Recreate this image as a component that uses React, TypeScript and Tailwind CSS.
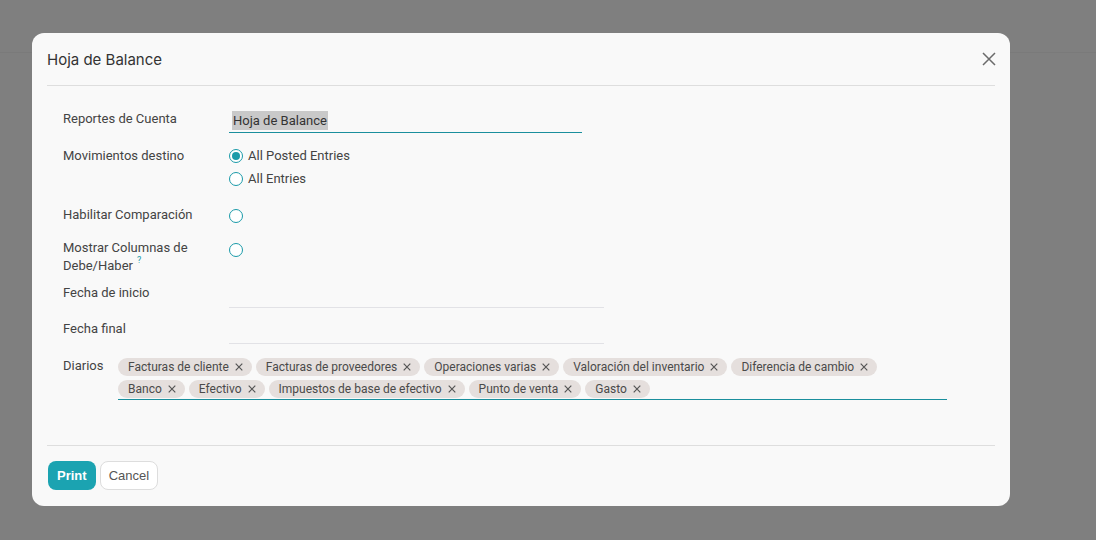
import React from "react";

const tagsRow1 = ["Facturas de cliente", "Facturas de proveedores", "Operaciones varias", "Valoración del inventario", "Diferencia de cambio"];
const tagsRow2 = ["Banco", "Efectivo", "Impuestos de base de efectivo", "Punto de venta", "Gasto"];

function Tag({ label }: { label: string }) {
  return (
    <span className="inline-flex items-center h-[18px] rounded-full bg-[#e5dfdd] pl-[10px] pr-[9px] text-[12px] leading-[18px] text-[#4a4a4a]">
      {label}
      <svg className="ml-[6px]" width="8" height="8" viewBox="0 0 8 8">
        <path d="M0.7 0.7 L7.3 7.3 M7.3 0.7 L0.7 7.3" stroke="#555" strokeWidth="1.2" />
      </svg>
    </span>
  );
}

function Radio({ checked }: { checked?: boolean }) {
  return (
    <span className="flex items-center justify-center w-[14px] h-[14px] rounded-full border border-[#1a9aa9] bg-white">
      {checked && <span className="w-[8px] h-[8px] rounded-full bg-[#1a9aa9]" />}
    </span>
  );
}

export default function App() {
  return (
    <div className="relative w-[1096px] h-[540px] bg-[#7f7f7f] overflow-hidden" style={{ fontFamily: "Roboto, 'Noto Sans', sans-serif" }}>
      <div className="absolute left-0 right-0 top-[52px] h-px bg-[#7a7a7a]" />
      <div className="absolute left-[32px] top-[33px] w-[978px] h-[473px] rounded-[12px] bg-[#f9f9f9] flex flex-col">
        {/* Header */}
        <div className="mx-[15px] h-[53px] border-b border-[#dedede] flex items-center justify-between">
          <span className="text-[15px] text-[#333] pt-[2px]" style={{ fontFamily: "Inter, Roboto, sans-serif" }}>Hoja de Balance</span>
          <svg width="14" height="14" viewBox="0 0 14 14" className="mr-[-1px]">
            <path d="M1 1 L13 13 M13 1 L1 13" stroke="#6b6b6b" strokeWidth="1.5" />
          </svg>
        </div>

        {/* Body */}
        <div className="mx-[15px] flex-1 border-b border-[#dedede] pl-[16px] pt-[24px] text-[13px] text-[#444]">
          {/* Row 1 */}
          <div className="flex">
            <div className="w-[166px] leading-[18px]">Reportes de Cuenta</div>
            <div className="w-[353px] h-[23px] border-b border-[#1a8f9d] pt-[1px] pl-[3px] flex items-start">
              <span className="bg-[#c9c9c9] px-[1px] leading-[19px] text-[#333]">Hoja de Balance</span>
            </div>
          </div>
          {/* Row 2 */}
          <div className="flex mt-[11px]">
            <div className="w-[166px] leading-[18px] mt-[3px]">Movimientos destino</div>
            <div className="flex flex-col">
              <div className="h-[23px] flex items-center gap-[5px]"><Radio checked /><span>All Posted Entries</span></div>
              <div className="h-[23px] flex items-center gap-[5px]"><Radio /><span>All Entries</span></div>
            </div>
          </div>
          {/* Row 3 */}
          <div className="flex items-start mt-[16px] h-[18px]">
            <div className="w-[166px] leading-[18px]">Habilitar Comparación</div>
            <div className="flex pt-[3px]"><Radio /></div>
          </div>
          {/* Row 4 */}
          <div className="flex items-start mt-[15px]">
            <div className="w-[166px] leading-[18px]">
              <div className="h-[18px]">Mostrar Columnas de</div>
              <div className="h-[18px] flex items-start">
                <span>Debe/Haber</span>
                <span className="ml-[4px] text-[9px] leading-[9px] text-[#1a9aa9] mt-[-1px]">?</span>
              </div>
            </div>
            <div className="flex pt-[4px]"><Radio /></div>
          </div>
          {/* Row 5 */}
          <div className="flex mt-[9px]">
            <div className="w-[166px] leading-[18px]">Fecha de inicio</div>
            <div className="w-[375px] h-[24px] border-b border-[#e2e2e6]" />
          </div>
          {/* Row 6 */}
          <div className="flex mt-[12px]">
            <div className="w-[166px] leading-[18px]">Fecha final</div>
            <div className="w-[375px] h-[24px] border-b border-[#e2e2e6]" />
          </div>
          {/* Row 7 */}
          <div className="flex mt-[13px]">
            <div className="w-[55px] leading-[18px]">Diarios</div>
            <div className="w-[829px] border-b border-[#1a8f9d] pt-[1px] pb-[1px] flex flex-col gap-[4px]">
              <div className="flex gap-[4px]">{tagsRow1.map((t) => <Tag key={t} label={t} />)}</div>
              <div className="flex gap-[4px]">{tagsRow2.map((t) => <Tag key={t} label={t} />)}</div>
            </div>
          </div>
        </div>

        {/* Footer */}
        <div className="h-[60px] px-[16px] pt-[15px] flex items-start gap-[4px]" style={{ fontFamily: "'Liberation Sans', Arial, sans-serif" }}>
          <button className="h-[29px] px-[9px] rounded-[8px] bg-[#1ba3b1] text-white text-[13px] font-bold">Print</button>
          <button className="h-[29px] px-[8px] rounded-[8px] border border-[#dddddd] bg-white text-[#555] text-[13px]">Cancel</button>
        </div>
      </div>
    </div>
  );
}
